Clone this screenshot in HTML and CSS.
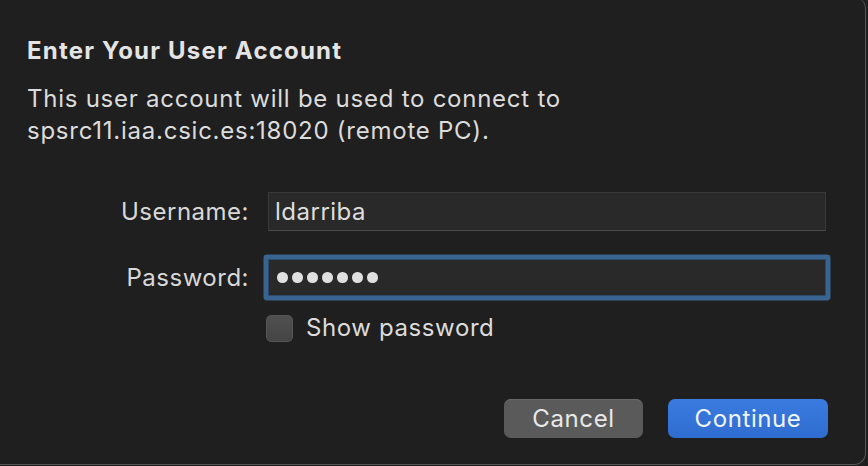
FILE: index.html
```html
<!DOCTYPE html>
<html>
<head>
<meta charset="utf-8">
<link rel="stylesheet" href="styles.css">
</head>
<body>
<div class="sheet">
  <h1 class="title">Enter Your User Account</h1>
  <p class="message">This user account will be used to connect to<br>spsrc11.iaa.csic.es:18020 (remote PC).</p>
  <div class="form">
    <label class="label">Username:</label>
    <div class="field"><span class="value">ldarriba</span></div>
    <label class="label">Password:</label>
    <div class="field focused"><span class="dots"><i></i><i></i><i></i><i></i><i></i><i></i><i></i></span></div>
    <span></span>
    <div class="check"><span class="box"></span><span class="check-label">Show password</span></div>
  </div>
  <div class="buttons">
    <button class="btn cancel">Cancel</button>
    <button class="btn primary">Continue</button>
  </div>
</div>
</body>
</html>
```

FILE: styles.css
```css
html, body {
  margin: 0;
  padding: 0;
  background: #1e1e1e;
  width: 868px;
  height: 466px;
  overflow: hidden;
}
body {
  font-family: Inter, "Noto Sans", sans-serif;
  color: #dedede;
}
.sheet {
  box-sizing: border-box;
  margin-top: -3px;
  width: 866px;
  height: 468px;
  background: #1f1f1f;
  border: 1px solid #565656;
  border-left: none;
  border-top: none;
  border-radius: 0 12px 12px 0;
  padding: 42px 0 0 27px;
  display: flex;
  flex-direction: column;
}
.title {
  margin: 0;
  font-size: 24px;
  line-height: 24px;
  font-weight: 700;
  color: #e4e4e4;
  letter-spacing: 1.2px;
}
.message {
  margin: 20px 0 0 0;
  font-size: 24px;
  line-height: 32px;
  color: #dcdcdc;
  letter-spacing: 0.75px;
}
.form {
  margin: 45px 0 0 0;
  display: grid;
  grid-template-columns: 222px 558px;
  column-gap: 19px;
  row-gap: 28px;
  align-items: center;
}
.label {
  text-align: right;
  font-size: 24px;
  line-height: 28px;
  color: #d8d8d8;
  letter-spacing: 0.5px;
}
.field {
  box-sizing: border-box;
  height: 39px;
  background: #292929;
  border: 1px solid #383838;
  border-bottom-color: #4a4a4a;
  display: flex;
  align-items: center;
  padding-left: 6px;
}
.value {
  font-size: 24px;
  line-height: 28px;
  color: #dedede;
  letter-spacing: 0.5px;
}
.focused {
  height: 37px;
  border-radius: 1px;
  box-shadow: 0 0 0 4.5px #3a6490;
  border-color: #2c4a6a;
  padding-left: 8px;
}
.dots {
  display: flex;
  gap: 4.5px;
}
.dots i {
  width: 10.5px;
  height: 10.5px;
  border-radius: 50%;
  background: #e0e0e0;
  display: block;
}
.check {
  display: flex;
  align-items: center;
  gap: 13px;
  margin-top: -10px;
  margin-left: -2px;
}
.box {
  box-sizing: border-box;
  width: 27px;
  height: 27px;
  border-radius: 5px;
  background: linear-gradient(#505050, #444);
  border: 1px solid #555;
}
.check-label {
  font-size: 24px;
  line-height: 28px;
  color: #dcdcdc;
  letter-spacing: 0.6px;
}
.buttons {
  margin: 57px 0 0 0;
  display: flex;
  justify-content: flex-end;
  gap: 25px;
  padding-right: 37px;
}
.btn {
  box-sizing: border-box;
  height: 39px;
  border-radius: 7px;
  border: none;
  font-family: Inter, "Noto Sans", sans-serif;
  font-size: 24px;
  letter-spacing: 0.6px;
  color: #e8e8e8;
  padding: 0;
}
.cancel {
  width: 139px;
  background: #5a5a5a;
  box-shadow: inset 0 1px 0 #686868;
}
.primary {
  width: 160px;
  background: linear-gradient(#3a7be0, #2f6ccf);
  color: #f0f4fa;
}
```
